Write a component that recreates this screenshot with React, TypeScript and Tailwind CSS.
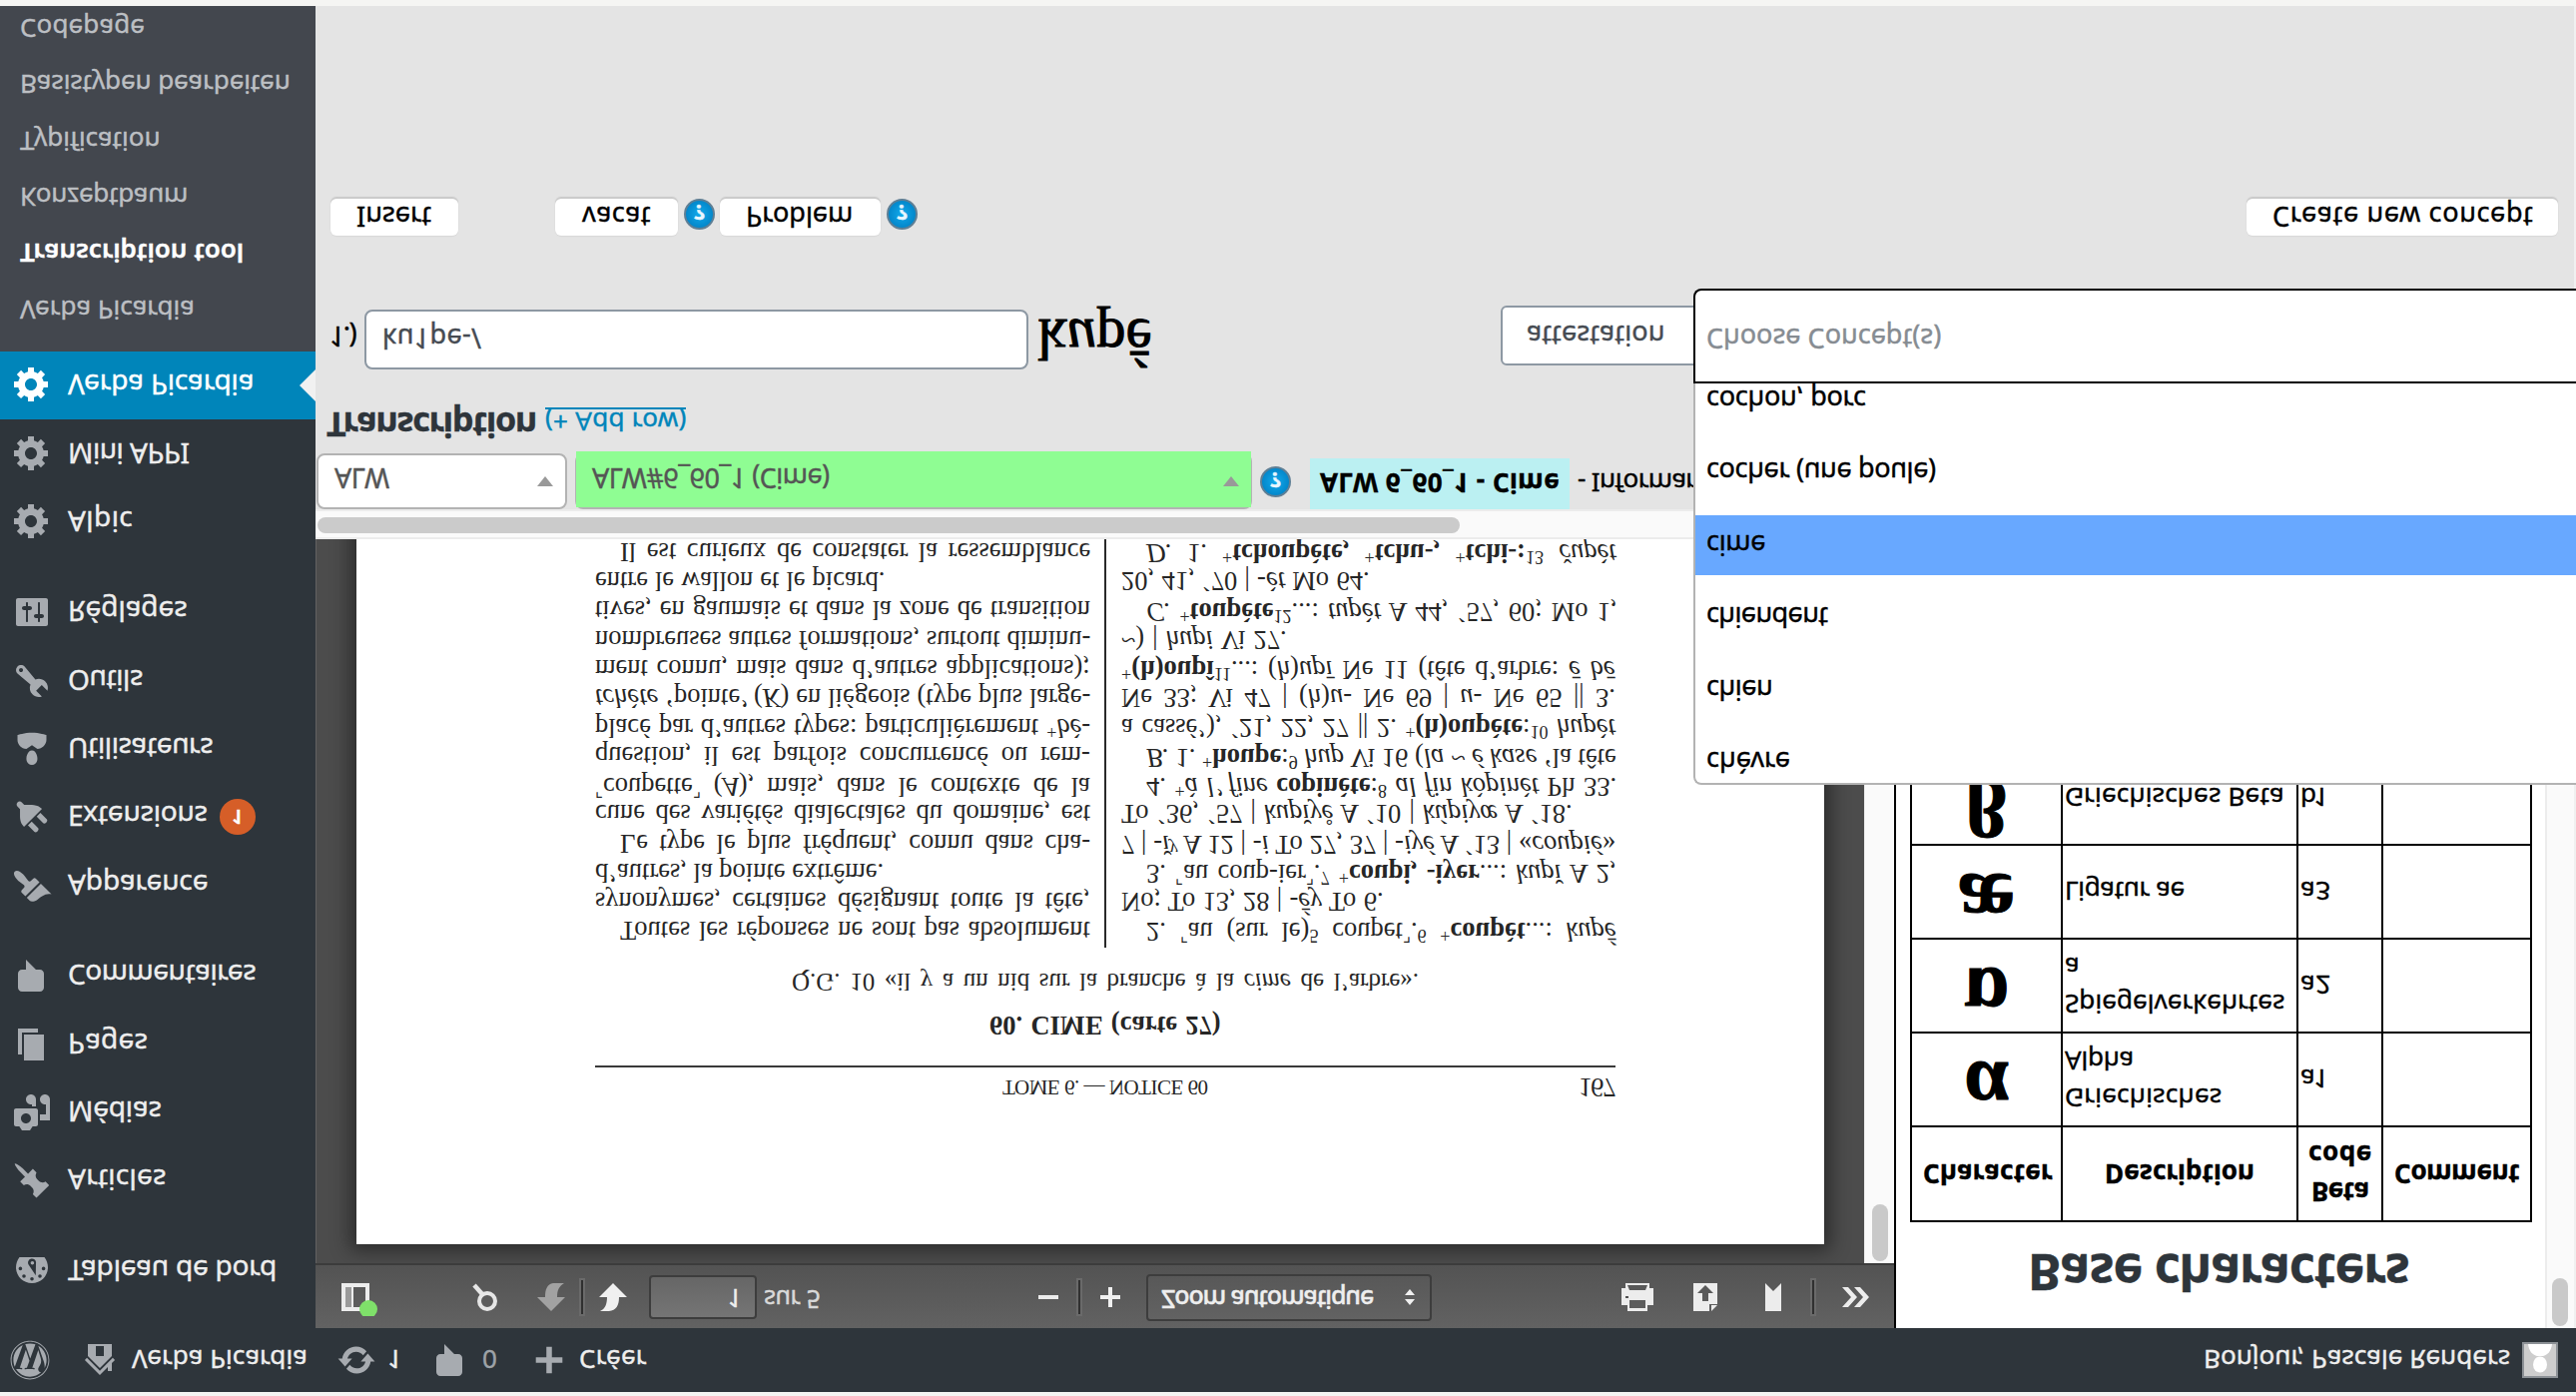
import { useLayoutEffect, useRef, type ReactNode } from "react";
import { FaWordpress } from "react-icons/fa";

/* Fits one line of text to the width of its box: widens by tracking, or by word gaps for book text. */
function Fit({ className = "", words = false, children }: { className?: string; words?: boolean; children: ReactNode }) {
  const box = useRef<HTMLSpanElement>(null);
  const line = useRef<HTMLSpanElement>(null);
  useLayoutEffect(() => {
    const b = box.current;
    const l = line.current;
    if (!b || !l) return;
    l.style.letterSpacing = "0px";
    l.style.wordSpacing = "0px";
    const extra = b.clientWidth - l.offsetWidth;
    const text = l.textContent ?? "";
    const gaps = text.split(" ").length - 1;
    if (words && extra > 0 && gaps > 0) l.style.wordSpacing = `${extra / gaps}px`;
    else if (text.length > 1) l.style.letterSpacing = `${extra / (text.length - 0.5)}px`;
  }, [words]);
  return (
    <span ref={box} className={"block shrink-0 whitespace-nowrap " + className}>
      <span ref={line} className="inline-block">{children}</span>
    </span>
  );
}

const ICONS = {
  dashboard:
    "M3.76 17h12.48c1.11-1.41 1.76-3.19 1.76-5.12C18 7.52 14.42 4 10 4s-8 3.52-8 7.88c0 1.93.66 3.71 1.76 5.12zM10 5.2a.9.9 0 1 0 0 1.8a.9.9 0 1 0 0-1.8zM6 6.6a.9.9 0 1 0 0 1.8a.9.9 0 1 0 0-1.8zM14 6.6a.9.9 0 1 0 0 1.8a.9.9 0 1 0 0-1.8zM4.2 10.4a.9.9 0 1 0 0 1.8a.9.9 0 1 0 0-1.8zM15.8 10.4a.9.9 0 1 0 0 1.8a.9.9 0 1 0 0-1.8zM11.9 7.9l.1 6a2 2 0 1 1-3.6-.8zM10.2 13.2a.9.9 0 1 0 0 1.8a.9.9 0 1 0 0-1.8z",
  post: "M10.44 3.02l1.82-1.82 6.36 6.35-1.83 1.82c-1.05-.68-2.48-.57-3.41.36l-.75.75c-.92.93-1.04 2.35-.35 3.41l-1.83 1.82-2.41-2.41-2.8 2.79c-.42.42-3.38 2.71-3.8 2.29s1.86-3.39 2.28-3.81l2.79-2.79L4.1 9.36l1.83-1.82c1.05.69 2.48.57 3.4-.36l.75-.75c.93-.92 1.05-2.35.36-3.41z",
  media:
    "M13 11V4c0-.55-.45-1-1-1h-1.67L9 1H5L3.67 3H2c-.55 0-1 .45-1 1v7c0 .55.45 1 1 1h10c.55 0 1-.45 1-1zM7 4.5c1.38 0 2.5 1.12 2.5 2.5S8.38 9.5 7 9.5 4.5 8.38 4.5 7 5.62 4.5 7 4.5zM14 6h5v10.5c0 1.38-1.12 2.5-2.5 2.5S14 17.88 14 16.5s1.12-2.5 2.5-2.5c.17 0 .34.02.5.05V9h-3V6zm-4 8.05V13h2v3.5c0 1.38-1.12 2.5-2.5 2.5S7 17.88 7 16.5 8.12 14 9.5 14c.17 0 .34.02.5.05z",
  page: "M6 15V2h10v13H6zm-1 1h8v2H3V5h2v11z",
  comments: "M5 2h9c1.1 0 2 .9 2 2v7c0 1.1-.9 2-2 2h-2l-5 5v-5H5c-1.1 0-2-.9-2-2V4c0-1.1.9-2 2-2z",
  appearance:
    "M14.48 11.06L7.41 3.99l1.5-1.5c.5-.56 2.3-.47 3.51.32 1.21.8 1.43 1.28 2.91 2.1 1.18.64 2.45 1.26 4.45.85zm-.71.71L6.7 4.7 4.93 6.47c-.39.39-.39 1.02 0 1.41l1.06 1.06c.39.39.39 1.03 0 1.42-.6.6-1.43 1.11-2.21 1.69-.35.26-.7.53-1.01.84C1.43 14.23.4 16.08 1.4 17.07c.99 1 2.84-.03 4.18-1.36.31-.31.58-.66.85-1.02.57-.78 1.08-1.61 1.69-2.21.39-.39 1.02-.39 1.41 0l1.06 1.06c.39.39 1.02.39 1.41 0z",
  plugins:
    "M13.11 4.36L9.87 7.6 8 5.73l3.24-3.24c.35-.34 1.05-.2 1.56.32.52.51.66 1.21.31 1.55zm-8 1.77l.91-1.12 9.01 9.01-1.19.84c-.71.71-2.63 1.16-3.82 1.16H6.14L4.9 17.26c-.59.59-1.54.59-2.12 0-.59-.58-.59-1.53 0-2.12l1.24-1.24v-3.88c0-1.13.4-3.19 1.09-3.89zm7.26 3.97l3.24-3.24c.34-.35 1.04-.21 1.55.31.52.51.66 1.21.31 1.55l-3.24 3.25z",
  users:
    "M10 9.25c-2.27 0-2.73-3.44-2.73-3.44C7 4.02 7.82 2 9.97 2c2.16 0 2.98 2.02 2.71 3.81 0 0-.41 3.44-2.68 3.44zm0 2.57L12.72 10c2.39 0 4.52 2.33 4.52 4.53v2.49s-3.65 1.13-7.24 1.13c-3.65 0-7.24-1.13-7.24-1.13v-2.49c0-2.25 1.94-4.48 4.47-4.48z",
  tools:
    "M16.68 9.77c-1.34 1.34-3.3 1.67-4.95.99l-5.41 6.52c-.99.99-2.59.99-3.58 0s-.99-2.59 0-3.57l6.52-5.42c-.68-1.65-.35-3.61.99-4.95 1.28-1.28 3.12-1.62 4.72-1.06l-2.89 2.89 2.82 2.82 2.86-2.87c.53 1.58.18 3.39-1.08 4.65zM3.81 16.21c.4.39 1.04.39 1.43 0 .4-.4.4-1.04 0-1.43-.39-.4-1.03-.4-1.43 0-.39.39-.39 1.03 0 1.43z",
  settings:
    "M18 16V4c0-.55-.45-1-1-1H3c-.55 0-1 .45-1 1v12c0 .55.45 1 1 1h14c.55 0 1-.45 1-1zM8 11h1c.55 0 1 .45 1 1s-.45 1-1 1H8v1.5c0 .28-.22.5-.5.5s-.5-.22-.5-.5V13H6c-.55 0-1-.45-1-1s.45-1 1-1h1V5.5c0-.28.22-.5.5-.5s.5.22.5.5V11zm5-2h-1c-.55 0-1-.45-1-1s.45-1 1-1h1V5.5c0-.28.22-.5.5-.5s.5.22.5.5V7h1c.55 0 1 .45 1 1s-.45 1-1 1h-1v5.5c0 .28-.22.5-.5.5s-.5-.22-.5-.5V9z",
  generic:
    "M18 12h-2.18c-.17.7-.44 1.35-.81 1.93l1.54 1.54-2.1 2.1-1.54-1.54c-.58.36-1.23.63-1.91.79V19H8v-2.18c-.68-.16-1.33-.43-1.91-.79l-1.54 1.54-2.12-2.12 1.54-1.54c-.36-.58-.63-1.23-.79-1.91H1V9.03h2.17c.16-.7.44-1.35.8-1.94L2.43 5.55l2.1-2.1 1.54 1.54c.58-.37 1.24-.64 1.93-.81V2h3v2.18c.68.16 1.33.43 1.91.79l1.54-1.54 2.12 2.12-1.54 1.54c.36.59.64 1.24.8 1.94H18V12zm-8.5 1.5c1.66 0 3-1.34 3-3s-1.34-3-3-3-3 1.34-3 3 1.34 3 3 3z",
  update:
    "M10.2 3.28c3.53 0 6.43 2.61 6.92 6h2.08l-3.5 4-3.5-4h2.32c-.45-1.97-2.21-3.45-4.32-3.45-1.45 0-2.73.71-3.54 1.78L4.95 5.66C6.23 4.2 8.11 3.28 10.2 3.28zm-.4 13.44c-3.52 0-6.43-2.61-6.92-6H.8l3.5-4c1.17 1.33 2.33 2.67 3.5 4H5.48c.45 1.97 2.21 3.45 4.32 3.45 1.45 0 2.73-.71 3.54-1.78l1.71 1.95c-1.28 1.46-3.15 2.38-5.25 2.38z",
  home: "M16 8.5l1.53 1.53-1.06 1.06L10 4.6l-6.47 6.49-1.06-1.06L10 2.5l4 4v-2h2v4zm-6-2.46l6 5.99V18H4v-5.97zM12 17v-5H8v5h4z",
  plus: "M17 8.6v2.9h-5.55V17h-2.9v-5.5H3V8.6h5.55V3h2.9v5.6z",
};

function Dash({ name, className = "" }: { name: keyof typeof ICONS; className?: string }) {
  return (
    <svg viewBox="0 0 20 20" className={"shrink-0 fill-current " + className}>
      <path fillRule="evenodd" d={ICONS[name]} />
    </svg>
  );
}

function AdminBar() {
  return (
    <header className="flex h-[64px] shrink-0 items-center bg-[#2e353b] text-[26px] leading-none text-[#eeeeee]">
      <FaWordpress className="ml-[10px] size-[40px] shrink-0 text-[#a7abb0]" />
      <Dash name="home" className="ml-[30px] size-[40px] text-[#a7abb0]" />
      <Fit className="ml-[12px] w-[176px]">Verba Picardia</Fit>
      <Dash name="update" className="ml-[29px] size-[40px] text-[#a7abb0]" />
      <Fit className="ml-[11px] w-[15px]">1</Fit>
      <Dash name="comments" className="ml-[28px] size-[40px] text-[#a7abb0]" />
      <Fit className="ml-[12px] w-[15px] text-[#9ea3a8]">0</Fit>
      <Dash name="plus" className="ml-[33px] size-[38px] text-[#a7abb0]" />
      <Fit className="ml-[11px] w-[68px]">Créer</Fit>
      <Fit className="ml-auto w-[307px]">Bonjour, Pascale Renders</Fit>
      <svg viewBox="0 0 36 36" className="mr-[18px] ml-[12px] size-[36px] shrink-0">
        <rect x="1" y="1" width="34" height="34" fill="#cdcdcd" stroke="#8c9196" strokeWidth="2" />
        <ellipse cx="18" cy="13.5" rx="7" ry="8" fill="#fff" />
        <path d="M6 34c1-8 5-11 9-12h6c4 1 8 4 9 12z" fill="#fff" />
      </svg>
    </header>
  );
}

function MenuItem({ icon, children }: { icon: keyof typeof ICONS; children: ReactNode }) {
  return (
    <li className="flex h-[68.4px] items-center pl-[12px]">
      <Dash name={icon} className="mr-[16px] size-[40px] text-[#a7abb0]" />
      {children}
    </li>
  );
}

function Sidebar() {
  return (
    <nav className="flex w-[316px] shrink-0 flex-col bg-[#2e353b] pt-[23px] text-[28px] leading-none text-[#eeeeee]">
      <ul>
        <MenuItem icon="dashboard"><Fit className="w-[209px]">Tableau de bord</Fit></MenuItem>
      </ul>
      <ul className="mt-[22px]">
        <MenuItem icon="post"><Fit className="w-[99px]">Articles</Fit></MenuItem>
        <MenuItem icon="media"><Fit className="w-[94px]">Médias</Fit></MenuItem>
        <MenuItem icon="page"><Fit className="w-[80px]">Pages</Fit></MenuItem>
        <MenuItem icon="comments"><Fit className="w-[188px]">Commentaires</Fit></MenuItem>
      </ul>
      <ul className="mt-[22px]">
        <MenuItem icon="appearance"><Fit className="w-[140px]">Apparence</Fit></MenuItem>
        <MenuItem icon="plugins">
          <Fit className="w-[140px]">Extensions</Fit>
          <span className="ml-[12px] flex size-[36px] items-center justify-center rounded-full bg-[#d65e28] text-[20px] font-semibold text-white">1</span>
        </MenuItem>
        <MenuItem icon="users"><Fit className="w-[146px]">Utilisateurs</Fit></MenuItem>
        <MenuItem icon="tools"><Fit className="w-[75px]">Outils</Fit></MenuItem>
        <MenuItem icon="settings"><Fit className="w-[120px]">Réglages</Fit></MenuItem>
      </ul>
      <ul className="mt-[22px]">
        <MenuItem icon="generic"><Fit className="w-[65px]">Alpic</Fit></MenuItem>
        <MenuItem icon="generic"><Fit className="w-[122px]">Mini APPI</Fit></MenuItem>
        <li className="flex h-[68.4px] items-center bg-[#0085ba] pl-[12px] text-white">
          <Dash name="generic" className="mr-[16px] size-[40px]" />
          <Fit className="w-[186px]">Verba Picardia</Fit>
          <svg viewBox="0 0 16 32" className="ml-auto h-[32px] w-[16px]"><path d="M16 0v32L0 16z" fill="#f1f1f1" /></svg>
        </li>
      </ul>
      <ul className="flex-1 overflow-hidden bg-[#43474e] pt-[13px] pl-[20px] text-[26px] text-[#bcbfc3]">
        <li className="flex h-[56.4px] items-center"><Fit className="w-[175px]">Verba Picardia</Fit></li>
        <li className="flex h-[56.4px] items-center font-semibold text-white"><Fit className="w-[224px]">Transcription tool</Fit></li>
        <li className="flex h-[56.4px] items-center"><Fit className="w-[168px]">Konzeptbaum</Fit></li>
        <li className="flex h-[56.4px] items-center"><Fit className="w-[141px]">Typification</Fit></li>
        <li className="flex h-[56.4px] items-center"><Fit className="w-[271px]">Basistypen bearbeiten</Fit></li>
        <li className="flex h-[56.4px] items-center"><Fit className="w-[125px]">Codepage</Fit></li>
      </ul>
    </nav>
  );
}

function Divider({ className }: { className: string }) {
  return <span className={"h-[34px] w-[2px] shrink-0 bg-[#303030] ring-2 ring-[#6a6a6a] " + className} />;
}

function PdfToolbar() {
  return (
    <div className="flex h-[65px] shrink-0 items-center border-b-2 border-[#3c3c3c] bg-linear-to-b from-[#626262] to-[#535353] pb-[2px] text-[#eeeeee]">
      <svg viewBox="0 0 38 38" className="ml-[26px] h-[38px] w-[38px] shrink-0">
        <path d="M0 5h28v28H0zM4 9v20h6V9zM12 9v20h12V9z" fillRule="evenodd" fill="#ececec" />
        <path d="M4 9h6v20H4z" fill="#9a9a9a" />
        <circle cx="27" cy="7" r="9" fill="#7fe06a" />
      </svg>
      <svg viewBox="0 0 28 28" className="ml-[92px] size-[28px] shrink-0" fill="none" stroke="#e6e6e6">
        <circle cx="16" cy="10" r="8" strokeWidth="4" />
        <path d="M11 17L3 26" strokeWidth="4.5" />
      </svg>
      <svg viewBox="0 0 28 28" className="ml-[38px] size-[28px] shrink-0"><path d="M14 0L28 14H20c0 7 2 11 7 14H16C10 27 8 22 8 14H0z" fill="#a2a2a2" /></svg>
      <Divider className="ml-[16px]" />
      <svg viewBox="0 0 28 28" className="ml-[16px] size-[28px] shrink-0"><path d="M14 28L28 14H20C20 5 17 1 10 0H1C6 2 8 7 8 14H0z" fill="#f0f0f0" /></svg>
      <span className="ml-[22px] flex h-[44px] w-[108px] shrink-0 items-center justify-end rounded-[4px] border-2 border-[#3d3d3d] bg-linear-to-b from-[#757575] to-[#666666] pr-[13px] pb-[3px] text-[25px] leading-none">1</span>
      <Fit className="ml-[7px] w-[57px] pb-[4px] text-[25px] leading-none text-[#d9d9d9]">sur 5</Fit>
      <span className="ml-[218px] h-[4px] w-[20px] shrink-0 bg-[#ececec]" />
      <Divider className="ml-[20px]" />
      <svg viewBox="0 0 20 20" className="ml-[20px] size-[20px] shrink-0"><path d="M8 0h4v8h8v4h-8v8H8v-8H0V8h8z" fill="#f0f0f0" /></svg>
      <span className="ml-[26px] flex h-[47px] w-[286px] shrink-0 items-center rounded-[4px] border-2 border-[#3d3d3d] bg-linear-to-b from-[#626262] to-[#585858] pl-[13px] font-medium">
        <Fit className="w-[213px] pb-[5px] text-[25px] leading-none">Zoom automatique</Fit>
        <svg viewBox="0 0 10 16" className="ml-[31px] h-[16px] w-[10px]"><path d="M5 0l5 6H0zM5 16l5-6H0z" fill="#f0f0f0" /></svg>
      </span>
      <svg viewBox="0 0 32 28" className="ml-[190px] h-[28px] w-[32px] shrink-0">
        <path d="M6 0h20v6h6v17h-4v5H4v-5H0V6h6zM8 3v8h16V3zM8 21l-2 5h20l-2-5z" fillRule="evenodd" fill="#ececec" />
        <rect x="4" y="13" width="3" height="2" fill="#505050" />
      </svg>
      <svg viewBox="0 0 24 28" className="ml-[40px] h-[28px] w-[24px] shrink-0">
        <path d="M0 0h16v7h8v21H0zM18 0l6 6h-6zM9 10v8H4l8 8 8-8h-5v-8z" fillRule="evenodd" fill="#ececec" />
      </svg>
      <svg viewBox="0 0 16 28" className="ml-[48px] h-[28px] w-[16px] shrink-0"><path d="M0 0h16v28l-8-8-8 8z" fill="#ececec" /></svg>
      <Divider className="ml-[31px]" />
      <svg viewBox="0 0 28 20" className="ml-[28px] h-[20px] w-[28px] shrink-0"><path d="M0 0h6l9 10-9 10H0l9-10zM12 0h6l9 10-9 10h-6l9-10z" fill="#ececec" /></svg>
    </div>
  );
}

const Sup = ({ children }: { children: ReactNode }) => <span className="relative top-[-7px] text-[18px]">{children}</span>;
const Corner = ({ children }: { children: ReactNode }) => <span className="relative top-[-7px] text-[17px]">{children}</span>;
const line = "flex h-[29.15px] items-center";

function LeftColumn() {
  return (
    <div className="w-[496px] shrink-0">
      <div className={line + " pl-[25px]"}><Fit words className="w-[471px]">Toutes les réponses ne sont pas absolument</Fit></div>
      <div className={line}><Fit words className="w-[496px]">synonymes, certaines désignant toute la tête,</Fit></div>
      <div className={line}><Fit words className="w-[289px]">d’autres, la pointe extrême.</Fit></div>
      <div className={line + " pl-[25px]"}><Fit words className="w-[471px]">Le type le plus fréquent, connu dans cha-</Fit></div>
      <div className={line}><Fit words className="w-[496px]">cune des variétés dialectales du domaine, est</Fit></div>
      <div className={line}><Fit words className="w-[496px]"><Corner>⌜</Corner>coupette<Corner>⌝</Corner> (<i>A</i>), mais, dans le contexte de la</Fit></div>
      <div className={line}><Fit words className="w-[496px]">question, il est parfois concurrencé ou rem-</Fit></div>
      <div className={line}><Fit words className="w-[496px]">placé par d’autres types: particulièrement <Sup>+</Sup><i>bè-</i></Fit></div>
      <div className={line}><Fit words className="w-[496px]"><i>tchète</i> ‘pointe’ (<i>K</i>) en liégeois (type plus large-</Fit></div>
      <div className={line}><Fit words className="w-[496px]">ment connu, mais dans d’autres applications);</Fit></div>
      <div className={line}><Fit words className="w-[496px]">nombreuses autres formations, surtout diminu-</Fit></div>
      <div className={line}><Fit words className="w-[496px]">tives, en gaumais et dans la zone de transition</Fit></div>
      <div className={line}><Fit words className="w-[290px]">entre le wallon et le picard.</Fit></div>
      <div className={line + " pl-[25px]"}><Fit words className="w-[471px] leading-[24px]">Il est curieux de constater la ressemblance</Fit></div>
    </div>
  );
}

function RightColumn() {
  return (
    <div className="w-[495px] shrink-0">
      <div className={line + " pl-[25px]"}><Fit words className="w-[471px]">2. <Corner>⌜</Corner>au (sur le)<Sup>5</Sup> coupet<Corner>⌝</Corner>.<Sup>6</Sup> <Sup>+</Sup><b>coupèt</b>...: <i>kupḗ</i></Fit></div>
      <div className={line}><Fit words className="w-[263px]">No; To 13, 28 | -<i>ḗy</i> To 6.</Fit></div>
      <div className={line + " pl-[25px]"}><Fit words className="w-[471px]">3. <Corner>⌜</Corner>au coup-ier<Corner>⌝</Corner>.<Sup>7</Sup> <Sup>+</Sup><b>coupi, -iyer</b>...: <i>kupĭ</i> A 2,</Fit></div>
      <div className={line}><Fit words className="w-[495px]">7 | -<i>ĭ</i><Sup><i>y</i></Sup> A 12 | -<i>i</i> To 27, 37 | -<i>iyé</i> A ´13 | «<i>coupié</i>»</Fit></div>
      <div className={line}><Fit words className="w-[452px]">To ´36, ´57 | <i>kupĭye̊</i> A ´10 | <i>kúpiyœ</i> A ´18.</Fit></div>
      <div className={line + " pl-[25px]"}><Fit words className="w-[471px]">4. <Sup>+</Sup><i>à l’ fine</i> <b>copinète</b>:<Sup>8</Sup> <i>al fin kòpinèt</i> Ph 33.</Fit></div>
      <div className={line + " pl-[25px]"}><Fit words className="w-[471px]"><i>B.</i> 1. <Sup>+</Sup><b>houpe</b>:<Sup>9</Sup> <i>hup</i> Vi 16 (<i>la ~ é kase</i> ‘la tête</Fit></div>
      <div className={line}><Fit words className="w-[495px]">a cassé’), ´21, 22, 27 || 2. <Sup>+</Sup><b>(h)oupète</b>:<Sup>10</Sup> <i>hupèt</i></Fit></div>
      <div className={line}><Fit words className="w-[495px]">Ne 33; Vi 47 | (<i>h</i>)<i>u</i>- Ne 69 | <i>u</i>- Ne 65 || 3.</Fit></div>
      <div className={line}><Fit words className="w-[495px]"><Sup>+</Sup><b>(h)oupî</b><Sup>11</Sup>...: (<i>h</i>)<i>upī</i> Ne 11 (tête d’arbre: <i>ē bē</i></Fit></div>
      <div className={line}><Fit words className="w-[166px]">~) | <i>hupi</i> Vi 27.</Fit></div>
      <div className={line + " pl-[25px]"}><Fit words className="w-[471px]"><i>C.</i> <Sup>+</Sup><b>toupète</b><Sup>12</Sup>...: <i>tupèt</i> A 44, ´57, 60; Mo 1,</Fit></div>
      <div className={line}><Fit words className="w-[249px]">20, 41, ´70 | -<i>èt</i> Mo 64.</Fit></div>
      <div className={line + " pl-[25px]"}><Fit words className="w-[471px] leading-[24px]"><i>D.</i> 1. <Sup>+</Sup><b>tchoupète,</b> <Sup>+</Sup><b>tchu-,</b> <Sup>+</Sup><b>tchi-:</b><Sup>13</Sup> <i>čupèt</i></Fit></div>
    </div>
  );
}

function PdfViewer() {
  return (
    <section className="flex w-[1581px] shrink-0 flex-col">
      <PdfToolbar />
      <div className="flex min-h-0 flex-1">
        <div className="w-[1551px] overflow-hidden border-l border-[#626262] bg-[#4c4c4c] pt-[19px] pl-[40px]">
          <article className="h-[760px] w-[1470px] bg-white pt-[139px] pl-[239px] font-['Liberation_Serif',serif] text-[26.5px] leading-[29px] text-[#262626] shadow-[0_0_18px_6px_rgba(0,0,0,0.45)] [-webkit-text-stroke:0]">
            <div className="flex h-[36px] w-[1022px] items-center">
              <Fit className="ml-[408px] w-[206px] text-[21px]">TOME 6. — NOTICE 60</Fit>
              <Fit className="ml-auto w-[37px]">167</Fit>
            </div>
            <div className="mt-[2px] h-[2px] w-[1022px] bg-[#3a3a3a]" />
            <div className="mt-[25px] flex h-[30px] items-center font-bold">
              <Fit words className="ml-[395px] w-[232px]">60. CIME (carte 27)</Fit>
            </div>
            <div className="mt-[12px] flex h-[32px] items-center text-[25px]">
              <Fit words className="ml-[197px] w-[628px]">Q.G. 10 «il y a un nid sur la branche à la <i>cime</i> de l’arbre».</Fit>
            </div>
            <div className="mt-[19px] flex">
              <div className="pt-[3px]"><LeftColumn /></div>
              <div className="mr-[15px] ml-[14px] h-[420px] w-[2px] bg-[#2a2a2a]" />
              <div className="pt-[3px]"><RightColumn /></div>
            </div>
          </article>
        </div>
        <div className="w-[30px] border-l border-[#ededed] bg-[#fafafa] pt-[2px] pl-[7px]">
          <div className="h-[57px] w-[16px] rounded-full bg-[#c9c9c9]" />
        </div>
      </div>
      <div className="h-[30px] shrink-0 border-y-2 border-[#ececec] bg-[#fafafa] pt-[4px] pl-[2px]">
        <div className="h-[16px] w-[1144px] rounded-full bg-[#cbcbcb]" />
      </div>
    </section>
  );
}

const cell = "border-2 border-black py-0 pl-[2px] align-middle";
const glyph =
  "border-2 border-black p-0 pb-[20px] text-center align-middle font-['Liberation_Serif','DejaVu_Serif',serif] text-[80px] leading-[70px] font-bold [-webkit-text-stroke:1px_black]";

function CharacterTable() {
  return (
    <section className="flex min-w-0 flex-1 overflow-hidden border-l-2 border-black bg-white text-black">
      <div className="w-[650px] shrink-0 pt-[25px] pl-[14px]">
        <h2 className="mb-[21px] ml-[118px] flex h-[60px] items-center text-[50px] leading-none font-bold text-[#2e353b]">
          <Fit className="w-[383px]">Base characters</Fit>
        </h2>
        <table className="w-[621px] table-fixed border-collapse text-[26px] leading-[37px]">
          <colgroup>
            <col className="w-[151px]" />
            <col className="w-[236px]" />
            <col className="w-[85px]" />
            <col className="w-[149px]" />
          </colgroup>
          <tbody>
            <tr className="h-[95px] font-bold">
              <td className={cell}><Fit className="ml-[9px] w-[130px]">Character</Fit></td>
              <td className={cell}><Fit className="ml-[40px] w-[150px]">Description</Fit></td>
              <td className={cell}><Fit className="ml-[11px] w-[58px]">Beta</Fit><Fit className="ml-[8px] w-[64px]">code</Fit></td>
              <td className={cell}><Fit className="ml-[9px] w-[125px]">Comment</Fit></td>
            </tr>
            <tr className="h-[94px]">
              <td className={glyph}>α</td>
              <td className={cell}><Fit className="w-[157px]">Griechisches</Fit><Fit className="w-[69px]">Alpha</Fit></td>
              <td className={cell}><Fit className="w-[27px]">a1</Fit></td>
              <td className={cell} />
            </tr>
            <tr className="h-[94px]">
              <td className={glyph}>ɒ</td>
              <td className={cell}><Fit className="w-[220px]">Spiegelverkehrtes</Fit>a</td>
              <td className={cell}><Fit className="w-[30px]">a2</Fit></td>
              <td className={cell} />
            </tr>
            <tr className="h-[94px]">
              <td className={glyph}>æ</td>
              <td className={cell}><Fit className="w-[120px]">Ligatur ae</Fit></td>
              <td className={cell}><Fit className="w-[30px]">a3</Fit></td>
              <td className={cell} />
            </tr>
            <tr className="h-[94px]">
              <td className={glyph}>β</td>
              <td className={cell}><Fit className="w-[220px]">Griechisches Beta</Fit></td>
              <td className={cell}><Fit className="w-[27px]">b1</Fit></td>
              <td className={cell} />
            </tr>
          </tbody>
        </table>
      </div>
      <div className="w-[29px] shrink-0 border-l-2 border-[#ececec] bg-[#fafafa] pt-[2px] pl-[5px]">
        <div className="h-[48px] w-[16px] rounded-full bg-[#c9c9c9]" />
      </div>
    </section>
  );
}

function Help({ className = "" }: { className?: string }) {
  return (
    <span className={"flex size-[31px] shrink-0 items-center justify-center rounded-full border-2 border-[#5f7f95] bg-radial from-[#12aaec] to-[#0079bd] text-[22px] leading-none font-bold text-[#e8f6ff] " + className}>
      ?
    </span>
  );
}

const button = "flex h-[37px] shrink-0 items-center rounded-[6px] bg-white text-black shadow-[0_2px_1px_#c9c9c9,0_-1px_1px_#d8d8d8]";

function TranscriptionPanel() {
  return (
    <section className="flex min-h-0 flex-1 flex-col overflow-hidden bg-[#e4e4e4] text-[27px] leading-none text-black">
      <div className="flex h-[58px] items-start">
        <div className="ml-px flex h-[56px] w-[251px] shrink-0 items-center rounded-[8px] border-2 border-[#b3b3b3] bg-white pl-[16px] text-[#555]">
          <Fit className="w-[55px] pt-[4px]">ALW</Fit>
          <svg viewBox="0 0 16 10" className="mr-[12px] ml-auto h-[10px] w-[16px]"><path d="M0 0h16L8 10z" fill="#999" /></svg>
        </div>
        <div className="ml-[8px] h-[56px] w-[678px] shrink-0 rounded-[8px] border-2 border-r border-l border-[#b3b3b3]">
          <div className="flex h-[56px] items-center bg-[#8ffd93] pb-[4px] pl-[16px] text-[#555]">
            <Fit className="w-[238px] pt-[4px]">ALW#6_60_1 (Cime)</Fit>
            <svg viewBox="0 0 16 10" className="mr-[12px] ml-auto h-[10px] w-[16px]"><path d="M0 0h16L8 10z" fill="#999" /></svg>
          </div>
        </div>
        <Help className="mt-[12px] ml-[8px]" />
        <div className="ml-[19px] flex h-[51px] w-[260px] shrink-0 items-center bg-[#bbf0f2] pl-[10px] text-[26px] font-bold">
          <Fit className="w-[240px]">ALW 6_60_1 - Cime</Fit>
        </div>
        <div className="ml-[8px] flex h-[51px] items-center text-[26px]"><Fit className="w-[133px]">- Informant</Fit></div>
      </div>
      <div className="flex h-[52px] items-center pl-[11px]">
        <h3 className="text-[34px] font-bold text-[#2e353b]"><Fit className="w-[211px]">Transcription</Fit></h3>
        <span className="ml-[8px] border-b-2 border-[#0085ba] pt-[7px] text-[26px] text-[#0085ba]"><Fit className="w-[141px]">(+ Add row)</Fit></span>
      </div>
      <div className="mt-[15px] flex h-[100px] items-center pb-[10px] pl-[14px]">
        <Fit className="mt-[5px] w-[27px]">1.)</Fit>
        <div className="ml-[8px] flex h-[60px] w-[665px] shrink-0 items-center rounded-[8px] border-2 border-[#8d98a3] bg-white pl-[16px] text-[#464b52]">
          <Fit className="w-[99px]">ku1pe-/</Fit>
        </div>
        <Fit className="ml-[9px] w-[115px] font-['Liberation_Serif',serif] text-[59px] leading-[60px] [-webkit-text-stroke:1px_black]">k<i>u</i>pḗ</Fit>
        <div className="mt-[7px] ml-[349px] flex h-[60px] w-[300px] shrink-0 items-center rounded-[6px] border-2 border-[#8d98a3] bg-white pl-[24px] text-[#464b52]">
          <Fit className="w-[138px]">attestation</Fit>
        </div>
      </div>
      <div className="mt-[49px] flex h-[37px] items-center pl-[15px]">
        <span className={button + " w-[128px] pl-[26px]"}><Fit className="w-[75px]">Insert</Fit></span>
        <span className={button + " ml-[97px] w-[123px] pl-[27px]"}><Fit className="w-[69px]">vacat</Fit></span>
        <Help className="mt-[6px] ml-[6px]" />
        <span className={button + " ml-[5px] w-[161px] pl-[26px]"}><Fit className="w-[107px]">Problem</Fit></span>
        <Help className="mt-[6px] ml-[6px]" />
        <span className={button + " mr-[16px] ml-auto w-[312px] pl-[26px]"}><Fit className="w-[261px]">Create new concept</Fit></span>
      </div>
    </section>
  );
}

function ConceptDropdown() {
  const row = "mb-[12.5px] flex h-[60px] items-center pl-[11px]";
  return (
    <div className="absolute top-[608px] left-[1696px] flex h-[497px] w-[884px] flex-col text-[27px] leading-none text-black">
      <ul className="h-[402px] overflow-hidden rounded-tl-[8px] border-t-2 border-l-2 border-[#b3b3b3] bg-white">
        <li className={row + " -mt-[10px]"}><Fit className="w-[84px]">chèvre</Fit></li>
        <li className={row}><Fit className="w-[67px]">chien</Fit></li>
        <li className={row}><Fit className="w-[122px]">chiendent</Fit></li>
        <li className={row + " bg-[#68a8ff]"}><Fit className="w-[59px]">cime</Fit></li>
        <li className={row}><Fit className="w-[230px]">cocher (une poule)</Fit></li>
        <li className={row}><Fit className="w-[160px]">cochon, porc</Fit></li>
      </ul>
      <div className="flex h-[95px] items-center rounded-bl-[8px] border-y-2 border-l-2 border-black bg-white pb-[7px] pl-[11px] text-[#868c92]">
        <Fit className="w-[235px]">Choose Concept(s)</Fit>
      </div>
    </div>
  );
}

export default function App() {
  return (
    <div className="relative flex h-[1398px] w-[2580px] -scale-y-100 flex-col overflow-hidden border-t-4 border-b-[6px] border-[#f5f5f3] bg-[#f5f5f3] font-['Noto_Sans',sans-serif] [-webkit-text-stroke:0.4px]">
      <AdminBar />
      <div className="flex min-h-0 flex-1">
        <Sidebar />
        <main className="flex min-w-0 flex-1 flex-col border-r-2 border-[#f0f0f0]">
          <div className="flex h-[820px] shrink-0">
            <PdfViewer />
            <CharacterTable />
          </div>
          <TranscriptionPanel />
        </main>
      </div>
      <ConceptDropdown />
    </div>
  );
}
